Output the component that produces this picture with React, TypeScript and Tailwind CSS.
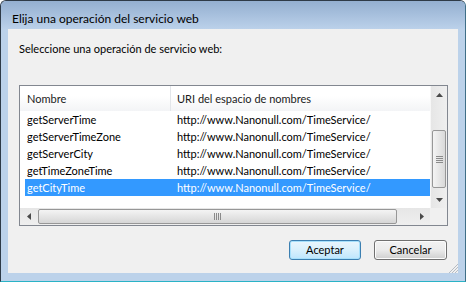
import React from "react";

const rows = ["getServerTime", "getServerTimeZone", "getServerCity", "getTimeZoneTime", "getCityTime"];
const uri = "http://www.Nanonull.com/TimeService/";

function Arrow({ dir }: { dir: "up" | "down" | "left" | "right" }) {
  const pts = {
    up: "0,4 7,4 3.5,0",
    down: "0,0 7,0 3.5,4",
    left: "4,0 4,7 0,3.5",
    right: "0,0 0,7 4,3.5",
  }[dir];
  const vertical = dir === "up" || dir === "down";
  return (
    <svg width={vertical ? 7 : 4} height={vertical ? 4 : 7} viewBox={vertical ? "0 0 7 4" : "0 0 4 7"}>
      <polygon points={pts} fill="#4a4a4a" />
    </svg>
  );
}

export default function App() {
  return (
    <div className="w-[466px] h-[282px] bg-white font-['Lato',sans-serif] text-[11px] text-black">
      <div className="flex h-full flex-col overflow-hidden rounded-t-[6px] border border-[#2e3a47] border-b-[#2ab3c6] border-r-[#3f6f88] bg-[#bcd2ea]">
        {/* Title bar */}
        <div className="h-[28px] shrink-0 bg-gradient-to-b from-[#94afd0] to-[#bbd1ea] pl-[11px] pt-[10px] text-[12px] leading-[16px]">
          Elija una operación del servicio web
        </div>

        <div className="flex flex-1 flex-col px-[7px] pb-[8px]">
          <div className="relative flex h-[244px] flex-col bg-[#f0f0f0]">
            <div className="ml-[11px] mt-[12px] h-[16px] leading-[16px]">Seleccione una operación de servicio web:</div>

            {/* List box */}
            <div className="ml-[11px] mt-[28px] flex h-[141px] w-[429px] flex-col border border-[#828790] bg-white">
              <div className="flex h-[122px]">
                <div className="w-[410px]">
                  {/* Header */}
                  <div className="flex h-[25px] bg-gradient-to-b from-white from-40% to-[#f3f4f6]">
                    <div className="w-[150px] pl-[7px] leading-[25px] text-[#1b1b1b]">Nombre</div>
                    <div className="w-px bg-[#e3e6ea]" />
                    <div className="flex-1 pl-[6px] leading-[25px] text-[#1b1b1b]">URI del espacio de nombres</div>
                  </div>
                  {/* Rows */}
                  <div className="flex flex-col pl-[5px]">
                    {rows.map((r, i) => {
                      const sel = i === rows.length - 1;
                      return (
                        <div
                          key={r}
                          className={`flex h-[17px] leading-[17px] ${sel ? "bg-[#3399ff] text-white" : ""}`}
                        >
                          <div className="w-[150px] pl-[2px]">{r}</div>
                          <div className="pl-[2px]">{uri}</div>
                        </div>
                      );
                    })}
                  </div>
                </div>

                {/* Vertical scrollbar */}
                <div className="flex w-[17px] flex-col border-l border-[#f7f7f7] bg-gradient-to-r from-[#e6e6e6] to-[#efefef]">
                  <div className="flex h-[17px] items-center justify-center">
                    <Arrow dir="up" />
                  </div>
                  <div className="flex-1 pt-[27px]">
                    <div className="mx-[1px] flex h-[58px] flex-col items-center justify-center gap-[1px] rounded-[2px] border border-[#979797] bg-gradient-to-r from-[#f4f4f4] to-[#d9d9d9]">
                      <div className="h-px w-[7px] bg-[#8a8a8a]" />
                      <div className="h-px w-[7px] bg-[#8a8a8a]" />
                      <div className="h-px w-[7px] bg-[#8a8a8a]" />
                      <div className="h-px w-[7px] bg-[#8a8a8a]" />
                    </div>
                  </div>
                  <div className="flex h-[17px] items-center justify-center">
                    <Arrow dir="down" />
                  </div>
                </div>
              </div>

              {/* Horizontal scrollbar */}
              <div className="flex h-[17px]">
                <div className="flex w-[410px] bg-gradient-to-b from-[#e6e6e6] to-[#efefef]">
                  <div className="flex w-[17px] items-center justify-center">
                    <Arrow dir="left" />
                  </div>
                  <div className="flex-1 py-[1px] pl-[1px]">
                    <div className="flex h-full w-[359px] items-center justify-center gap-[1px] rounded-[2px] border border-[#979797] bg-gradient-to-b from-[#f4f4f4] to-[#d6d6d6]">
                      <div className="h-[7px] w-px bg-[#8a8a8a]" />
                      <div className="h-[7px] w-px bg-[#8a8a8a]" />
                      <div className="h-[7px] w-px bg-[#8a8a8a]" />
                      <div className="h-[7px] w-px bg-[#8a8a8a]" />
                    </div>
                  </div>
                  <div className="flex w-[17px] items-center justify-center">
                    <Arrow dir="right" />
                  </div>
                </div>
                <div className="w-[17px] bg-[#f0f0f0]" />
              </div>
            </div>

            {/* Buttons */}
            <div className="mr-[11px] mt-[14px] flex justify-end gap-[13px]">
              <button className="h-[20px] w-[72px] rounded-[3px] border border-[#3c7fb1] bg-gradient-to-b from-[#eaf6fd] via-[#d9f0fc] to-[#bee6fd] leading-[16px] shadow-[inset_0_0_0_1px_#a7e0fb]">
                Aceptar
              </button>
              <button className="h-[20px] w-[73px] rounded-[3px] border border-[#707070] bg-gradient-to-b from-[#f2f2f2] via-[#ebebeb] to-[#cfcfcf] leading-[16px] shadow-[inset_0_0_0_1px_#fcfcfc]">
                Cancelar
              </button>
            </div>

            {/* Resize grip */}
            <svg className="absolute bottom-0 right-0" width="11" height="11" viewBox="0 0 11 11">
              <line x1="2" y1="11" x2="11" y2="2" stroke="#b6bcc4" strokeWidth="1" />
              <line x1="5" y1="11" x2="11" y2="5" stroke="#b6bcc4" strokeWidth="1" />
              <line x1="8" y1="11" x2="11" y2="8" stroke="#b6bcc4" strokeWidth="1" />
            </svg>
          </div>
        </div>
      </div>
    </div>
  );
}
